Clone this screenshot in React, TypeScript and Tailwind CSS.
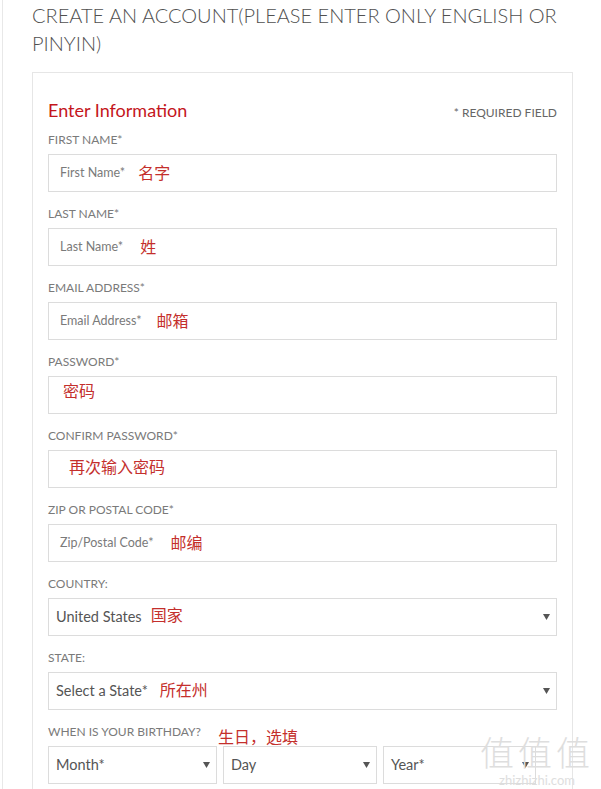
import { ReactNode } from 'react';

const FONT = { fontFamily: 'Lato, "Noto Sans CJK SC", sans-serif' };

function Note({ children, className = '' }: { children: ReactNode; className?: string }) {
  return (
    <span className={`text-[16px] leading-none text-[#c42f2c] ${className}`}>{children}</span>
  );
}

function Arrow() {
  return (
    <svg width="7" height="6" viewBox="0 0 7 6" className="shrink-0">
      <path d="M0 0 H7 L3.5 6 Z" fill="#555" />
    </svg>
  );
}

function Field({ label, note, children }: { label: string; note?: ReactNode; children: ReactNode }) {
  return (
    <div className="mb-[15px]">
      <div className="flex items-center h-[14px] mb-[7px]">
        <span className="text-[12px] leading-[14px] text-[#7a7a7a] uppercase">{label}</span>
        {note}
      </div>
      {children}
    </div>
  );
}

function TextBox({ placeholder, note, gap, noteClass = '' }: { placeholder?: string; note: string; gap: string; noteClass?: string }) {
  return (
    <div className="h-[38px] border border-[#dcdcdc] bg-white flex items-center pl-[11px]">
      {placeholder && <span className="text-[12.5px] text-[#7a7a7a]">{placeholder}</span>}
      <Note className={`${gap} ${noteClass}`}>{note}</Note>
    </div>
  );
}

function SelectBox({ value, note, gap, className = '' }: { value: string; note?: string; gap?: string; className?: string }) {
  return (
    <div className={`h-[38px] border border-[#dcdcdc] bg-white flex items-center pl-[7px] pr-[6px] ${className}`}>
      <span className="text-[14.5px] text-[#555]">{value}</span>
      {note && <Note className={gap}>{note}</Note>}
      <div className="flex-1" />
      <Arrow />
    </div>
  );
}

export default function App() {
  return (
    <div className="relative w-[601px] h-[789px] overflow-hidden bg-white" style={FONT}>
      <div className="ml-[2px] h-full border-l border-[#e8e8e8] pl-[29px] pr-[28px]">
        <h1 className="pt-[1px] text-[20px] leading-[28px] font-light text-[#505050] uppercase">
          Create an account(please enter only english or pinyin)
        </h1>

        <div className="mt-[15px] border border-[#e6e6e6] px-[15px] pt-[25px] h-[800px]">
          <div className="flex items-end justify-between h-[24px] mb-[11px]">
            <span className="text-[18px] leading-[24px] text-[#c4161c]">Enter Information</span>
            <span className="text-[12px] leading-[18px] text-[#666]">* REQUIRED FIELD</span>
          </div>

          <Field label="First Name*">
            <TextBox placeholder="First Name*" note="名字" gap="ml-[13px]" />
          </Field>
          <Field label="Last Name*">
            <TextBox placeholder="Last Name*" note="姓" gap="ml-[17px]" />
          </Field>
          <Field label="Email Address*">
            <TextBox placeholder="Email Address*" note="邮箱" gap="ml-[15px]" />
          </Field>
          <Field label="Password*">
            <TextBox note="密码" gap="ml-[3px]" noteClass="-mt-[8px]" />
          </Field>
          <Field label="Confirm Password*">
            <TextBox note="再次输入密码" gap="ml-[9px]" noteClass="-mt-[4px]" />
          </Field>
          <Field label="Zip or Postal Code*">
            <TextBox placeholder="Zip/Postal Code*" note="邮编" gap="ml-[17px]" />
          </Field>
          <Field label="Country:">
            <SelectBox value="United States" note="国家" gap="ml-[9px] -mt-[4px]" />
          </Field>
          <Field label="State:">
            <SelectBox value="Select a State*" note="所在州" gap="ml-[12px] -mt-[2px]" />
          </Field>
          <Field
            label="When is your birthday?"
            note={<Note className="ml-[17px] mt-[10px]">生日，选填</Note>}
          >
            <div className="flex gap-[6px]">
              <SelectBox value="Month*" className="w-[169px]" />
              <SelectBox value="Day" className="w-[154px]" />
              <SelectBox value="Year*" className="w-[153px]" />
            </div>
          </Field>
        </div>
      </div>

      {/* watermark */}
      <div className="absolute right-[4px] top-[734px] w-[120px] flex flex-col items-center text-[#dedede] pointer-events-none">
        <span className="text-[34px] leading-[38px] font-light tracking-[4px]">值值值</span>
        <span className="mt-[1px] text-[13px] leading-[14px] whitespace-nowrap">zhizhizhi.com</span>
      </div>
    </div>
  );
}
